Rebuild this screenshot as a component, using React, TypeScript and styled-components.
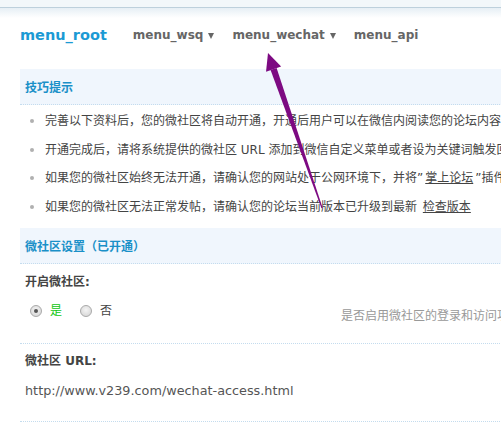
import React from "react";
import styled, { createGlobalStyle } from "styled-components";

const Global = createGlobalStyle`
  html, body { margin: 0; padding: 0; background: #fff; overflow: hidden; }
  body { font-family: "DejaVu Sans", "Noto Sans CJK SC", sans-serif; font-size: 12px; color: #444; }
`;

const Page = styled.div`
  position: relative;
  width: 501px;
  height: 422px;
  overflow: hidden;
`;

const TopBar = styled.div`
  height: 7px;
  background: #f2f7fa;
  border-bottom: 1px solid #bdd0dc;
`;

const TopShade = styled.div`
  height: 10px;
  background: linear-gradient(#e6eff5, #ffffff);
`;

const Nav = styled.nav`
  display: flex;
  align-items: center;
  height: 34px;
  padding-left: 20px;
  margin-bottom: 17px;
  white-space: nowrap;
`;

const Brand = styled.span`
  font-family: "DejaVu Sans", sans-serif;
  font-weight: bold;
  font-size: 14.5px;
  color: #1b9ad4;
  margin-right: 26px;
`;

const NavItem = styled.span`
  display: inline-flex;
  align-items: center;
  font-family: "DejaVu Sans", sans-serif;
  font-weight: bold;
  font-size: 12px;
  color: #666;
  margin-right: 18px;
`;

const Caret = styled.span`
  display: inline-block;
  width: 0;
  height: 0;
  margin-left: 5px;
  margin-top: 2px;
  border-left: 3px solid transparent;
  border-right: 3px solid transparent;
  border-top: 6px solid #666;
`;

const Content = styled.div`
  margin-left: 20px;
  width: 760px;
  white-space: nowrap;
`;

const SectionHeader = styled.div<{ $gap?: number }>`
  height: 35px;
  line-height: 35px;
  margin-top: ${(p) => p.$gap ?? 0}px;
  padding-left: 5px;
  background: #f0f6fd;
  border-bottom: 1px dotted #c4dcee;
  color: #1a90c8;
  font-weight: bold;
  font-size: 12px;
  font-family: "Noto Sans CJK SC", sans-serif;
`;

const Tips = styled.ul`
  list-style: none;
  margin: 0;
  padding: 2px 0 0 0;
`;

const Tip = styled.li`
  position: relative;
  height: 28.67px;
  line-height: 28.67px;
  padding-left: 25px;
  color: #444;
  &::before {
    content: "";
    position: absolute;
    left: 10px;
    top: 12px;
    width: 4px;
    height: 4px;
    border-radius: 50%;
    background: #b0b0b0;
  }
`;

const Link = styled.a`
  color: #444;
  text-decoration: underline;
  margin: 0 2px;
`;

const Label = styled.div<{ $top: number }>`
  padding: ${(p) => p.$top}px 0 0 5px;
  line-height: 16px;
  font-weight: bold;
  color: #444;
`;

const ValueRow = styled.div<{ $top: number; $bottom: number }>`
  display: grid;
  grid-template-columns: 316px 1fr;
  align-items: start;
  padding: ${(p) => p.$top}px 0 ${(p) => p.$bottom}px 5px;
  line-height: 18px;
  border-bottom: 1px dotted #c4dcee;
`;

const RadioGroup = styled.div`
  display: flex;
  align-items: center;
  height: 18px;
`;

const RadioOption = styled.label<{ $green?: boolean }>`
  display: inline-flex;
  align-items: center;
  margin-left: 5px;
  margin-right: 13px;
  color: ${(p) => (p.$green ? "#11c611" : "#444")};
`;

const RadioDot = styled.span<{ $checked?: boolean }>`
  position: relative;
  display: inline-block;
  width: 10px;
  height: 10px;
  border-radius: 50%;
  border: 1px solid #a9a9a9;
  background: radial-gradient(circle at 50% 40%, #f4f4f4, #d2d2d2);
  margin-right: 8px;
  &::after {
    content: "";
    display: ${(p) => (p.$checked ? "block" : "none")};
    position: absolute;
    left: 3px;
    top: 3px;
    width: 4px;
    height: 4px;
    border-radius: 50%;
    background: #555;
  }
`;

const Desc = styled.span`
  color: #999;
  padding-top: 5px;
`;

const Url = styled.span`
  font-family: "DejaVu Sans", sans-serif;
  font-size: 12.8px;
  color: #555;
`;

const ArrowSvg = styled.svg`
  position: absolute;
  left: 0;
  top: 0;
  pointer-events: none;
`;

function Arrow() {
  const tip = [268, 53];
  const end = [322, 208];
  const dx = end[0] - tip[0];
  const dy = end[1] - tip[1];
  const len = Math.hypot(dx, dy);
  const ux = dx / len;
  const uy = dy / len;
  const px = -uy;
  const py = ux;
  const headLen = 17;
  const bx = tip[0] + ux * headLen;
  const by = tip[1] + uy * headLen;
  const hw = 8;
  const sw = 3.2;
  const ew = 0.6;
  const head = `${tip[0]},${tip[1]} ${bx + px * hw},${by + py * hw} ${bx - px * hw},${by - py * hw}`;
  const shaft = `${bx + px * sw},${by + py * sw} ${end[0] + px * ew},${end[1] + py * ew} ${end[0] - px * ew},${end[1] - py * ew} ${bx - px * sw},${by - py * sw}`;
  return (
    <ArrowSvg width="501" height="422" viewBox="0 0 501 422">
      <polygon points={head} fill="#7d0a82" />
      <polygon points={shaft} fill="#7d0a82" />
    </ArrowSvg>
  );
}

export default function App() {
  return (
    <Page>
      <Global />
      <TopBar />
      <TopShade />
      <Nav>
        <Brand>menu_root</Brand>
        <NavItem>
          menu_wsq<Caret />
        </NavItem>
        <NavItem>
          menu_wechat<Caret />
        </NavItem>
        <NavItem>menu_api</NavItem>
      </Nav>
      <Content>
        <SectionHeader>技巧提示</SectionHeader>
        <Tips>
          <Tip>完善以下资料后，您的微社区将自动开通，开通后用户可以在微信内阅读您的论坛内容，参与互动</Tip>
          <Tip>开通完成后，请将系统提供的微社区 URL 添加到微信自定义菜单或者设为关键词触发回复</Tip>
          <Tip>
            如果您的微社区始终无法开通，请确认您的网站处于公网环境下，并将”<Link>掌上论坛</Link>”插件开启
          </Tip>
          <Tip>
            如果您的微社区无法正常发帖，请确认您的论坛当前版本已升级到最新 <Link>检查版本</Link>
          </Tip>
        </Tips>
        <SectionHeader $gap={6}>微社区设置（已开通）</SectionHeader>
        <Label $top={10}>开启微社区:</Label>
        <ValueRow $top={12} $bottom={18}>
          <RadioGroup>
            <RadioOption $green>
              <RadioDot $checked />是
            </RadioOption>
            <RadioOption>
              <RadioDot />否
            </RadioOption>
          </RadioGroup>
          <Desc>是否启用微社区的登录和访问功能</Desc>
        </ValueRow>
        <Label $top={9}>微社区 URL:</Label>
        <ValueRow $top={13} $bottom={21}>
          <Url>http://www.v239.com/wechat-access.html</Url>
        </ValueRow>
      </Content>
      <Arrow />
    </Page>
  );
}
